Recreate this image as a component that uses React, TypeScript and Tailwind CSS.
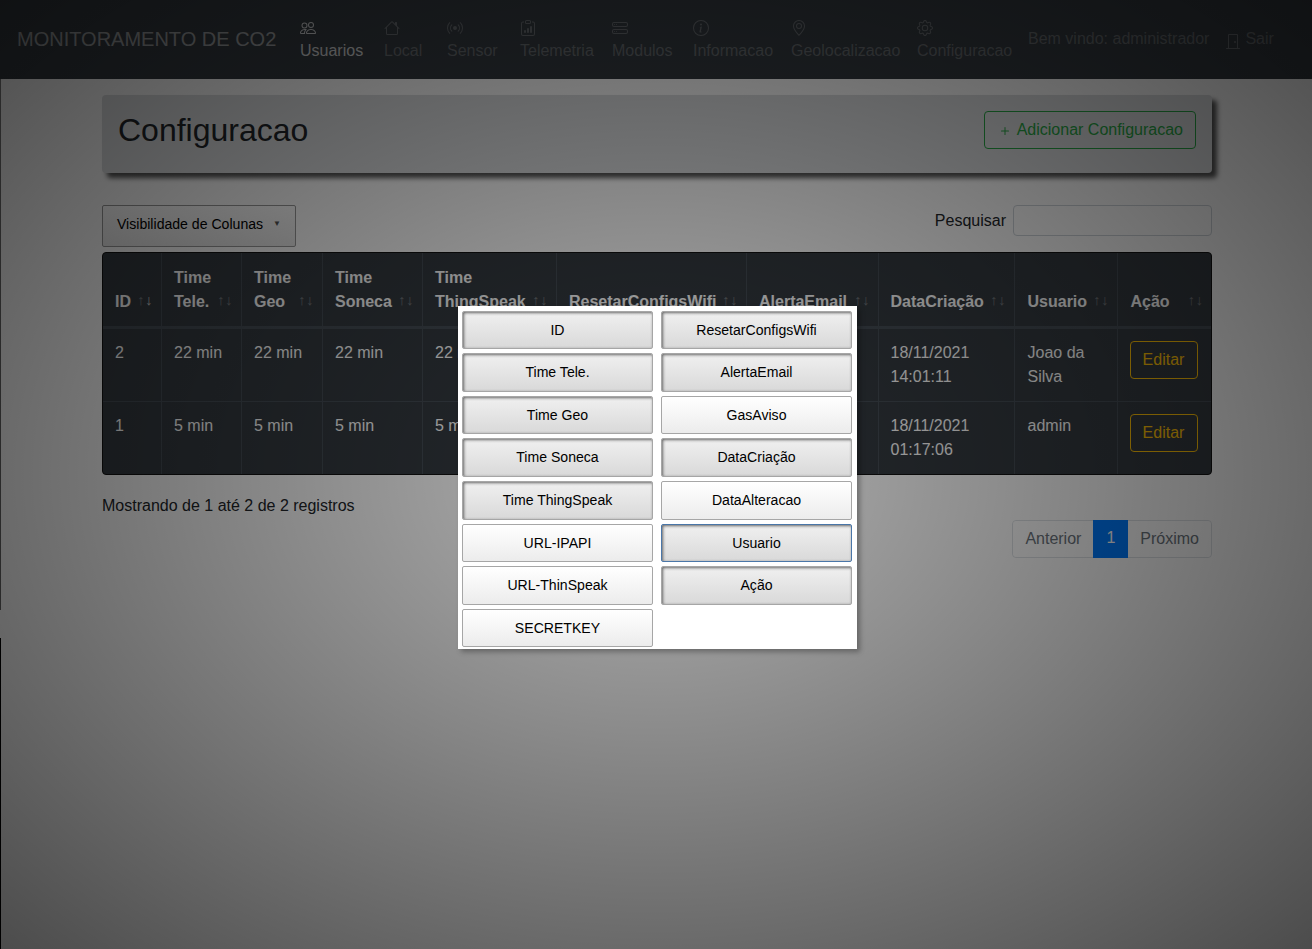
import { BsPeople, BsHouse, BsBroadcast, BsClipboardData, BsHddStack, BsInfoCircle, BsGeoAlt, BsGear, BsDoorClosed, BsPlus } from "react-icons/bs"

const navItems = [
  { label: "Usuarios", Icon: BsPeople, width: "w-[84px]", active: true },
  { label: "Local", Icon: BsHouse, width: "w-[63px]" },
  { label: "Sensor", Icon: BsBroadcast, width: "w-[73px]" },
  { label: "Telemetria", Icon: BsClipboardData, width: "w-[92px]" },
  { label: "Modulos", Icon: BsHddStack, width: "w-[81px]" },
  { label: "Informacao", Icon: BsInfoCircle, width: "w-[98px]" },
  { label: "Geolocalizacao", Icon: BsGeoAlt, width: "w-[126px]" },
  { label: "Configuracao", Icon: BsGear, width: "w-[111px]" },
]

const columns = [
  { lines: ["ID"], width: "w-[58px]", pad: "pl-3", active: true },
  { lines: ["Time", "Tele."], width: "w-[80px]", pad: "pl-[12.5px]" },
  { lines: ["Time", "Geo"], width: "w-[81px]", pad: "pl-[12.5px]" },
  { lines: ["Time", "Soneca"], width: "w-[100px]", pad: "pl-[12.5px]" },
  { lines: ["Time", "ThingSpeak"], width: "w-[134px]", pad: "pl-[12.5px]" },
  { lines: ["ResetarConfigsWifi"], width: "w-[190px]", pad: "pl-[12.5px]" },
  { lines: ["AlertaEmail"], width: "w-[132px]", pad: "pl-[12.5px]" },
  { lines: ["DataCriação"], width: "w-[136px]", pad: "pl-3" },
  { lines: ["Usuario"], width: "w-[103px]", pad: "pl-[13px]" },
  { lines: ["Ação"], width: "w-[94px]", pad: "pl-[13px]" },
]

const rows = [
  ["2", "22 min", "22 min", "22 min", "22 min", "", "", "18/11/2021 14:01:11", "Joao da Silva"],
  ["1", "5 min", "5 min", "5 min", "5 min", "", "", "18/11/2021 01:17:06", "admin"],
]

const leftButtons = [
  { label: "ID", on: true },
  { label: "Time Tele.", on: true },
  { label: "Time Geo", on: true },
  { label: "Time Soneca", on: true },
  { label: "Time ThingSpeak", on: true },
  { label: "URL-IPAPI" },
  { label: "URL-ThinSpeak" },
  { label: "SECRETKEY" },
]

const rightButtons = [
  { label: "ResetarConfigsWifi", on: true },
  { label: "AlertaEmail", on: true },
  { label: "GasAviso" },
  { label: "DataCriação", on: true },
  { label: "DataAlteracao" },
  { label: "Usuario", on: true, focus: true },
  { label: "Ação", on: true },
]

function ColumnButton({ label, on, focus }: { label: string; on?: boolean; focus?: boolean }) {
  return (
    <button
      className={
        "block w-full h-[38.6px] mb-[4px] border text-center text-[14.08px] leading-[22.5px] text-black rounded-[2px] " +
        (on
          ? "bg-gradient-to-b from-[#f0f0f0] to-[#d9d9d9] shadow-[inset_1px_1px_3px_#666] "
          : "bg-gradient-to-b from-white to-[#ececec] ") +
        (focus ? "border-[#4a76a8]" : "border-[#a6a6a6]")
      }
    >
      {label}
    </button>
  )
}

function App() {
  return (
    <div className="relative min-h-[949px] bg-white font-['Liberation_Sans',Arial,sans-serif] text-[16px] leading-6 text-[#212529]">
      {/* Navbar */}
      <div className="flex items-center h-[79px] bg-[#343a40] pl-[17px]">
        <div className="w-[283px] pb-[2px] text-[20px] text-white/50 whitespace-nowrap">MONITORAMENTO DE CO2</div>
        <div className="flex">
          {navItems.map(({ label, Icon, width, active }) => (
            <div key={label} className={width + " pt-[3px] whitespace-nowrap " + (active ? "text-white/75" : "text-white/25")}>
              <Icon className="w-4 h-4 mb-[3px]" />
              <div>{label}</div>
            </div>
          ))}
        </div>
        <div className="pb-[2px] text-white/25 whitespace-nowrap">Bem vindo: administrador</div>
        <div className="flex items-center ml-4 text-white/25">
          <BsDoorClosed className="w-4 h-4 mr-[4px] mt-[2px]" />
          <span className="pb-[2px]">Sair</span>
        </div>
      </div>

      {/* Page body */}
      <div className="w-[1110px] ml-[102px] pt-4">
        <div className="flex justify-between h-[78px] bg-[#dcdee0] rounded-[4px] shadow-[5px_5px_5px_#555] pl-4 pr-4 pt-4">
          <h1 className="text-[32px] leading-[38px] font-normal">Configuracao</h1>
          <button className="flex items-center h-[38px] pl-3 pr-3 border border-[#28a745] rounded-[4px] text-[#28a745]">
            <BsPlus className="w-4 h-4 mr-[4px] mt-[2px]" />
            Adicionar Configuracao
          </button>
        </div>

        <div className="flex justify-between mt-8">
          <button className="flex items-center justify-center w-[194px] h-[42px] pb-1 border border-[#999] rounded-[2px] bg-gradient-to-b from-white to-[#e9e9e9] text-[14.08px] text-black">
            Visibilidade de Colunas
            <span className="ml-[10px] text-[8px] text-[#555]">▼</span>
          </button>
          <div className="flex items-center h-[31px]">
            <span className="mr-[7px]">Pesquisar</span>
            <input className="w-[199px] h-[31px] bg-white border border-[#ced4da] rounded-[4px]" />
          </div>
        </div>

        {/* Table */}
        <div className="mt-[5px] rounded-[4px] overflow-hidden border border-[#111] bg-[#343a40]">
          <table className="table-fixed w-[1108px] border-collapse text-white">
            <thead>
              <tr className="border-b-[3px] border-[#454d55]">
                {columns.map((c) => (
                  <th key={c.lines.join()} className={c.width + " " + c.pad + " relative h-[74px] pr-3 pb-[12px] align-bottom text-left font-bold whitespace-nowrap border-l border-[#454d55] first:border-l-0"}>
                    {c.lines.map((line) => (
                      <div key={line}>{line}</div>
                    ))}
                    <span className="absolute right-4 bottom-[14px] text-[14.4px] opacity-30">↑</span>
                    <span className={"absolute right-2 bottom-[14px] text-[14.4px] " + (c.active ? "opacity-70" : "opacity-30")}>↓</span>
                  </th>
                ))}
              </tr>
            </thead>
            <tbody>
              {rows.map((row, r) => (
                <tr key={row[0]} className="border-b border-[#454d55] last:border-b-0">
                  {row.map((cell, i) => (
                    <td key={i} className={"pt-3 pr-3 align-top border-l border-[#454d55] first:border-l-0 " + (i === 0 || i === 7 ? "pl-3" : i === 8 ? "pl-[13px]" : "pl-[12.5px]") + (r === 0 ? " h-[74px]" : " h-[73px]")}>
                      {cell}
                    </td>
                  ))}
                  <td className="h-[73px] pl-3 pr-3 pt-3 align-top border-l border-[#454d55]">
                    <button className="w-[68px] h-[38px] border border-[#ffc107] rounded-[4px] text-[#ffc107]">Editar</button>
                  </td>
                </tr>
              ))}
            </tbody>
          </table>
        </div>

        <div className="mt-[19px]">Mostrando de 1 até 2 de 2 registros</div>

        <div className="flex justify-end mt-[2px]">
          <div className="flex h-[38px] border border-[#dee2e6] rounded-[4px]">
            <span className="px-3 pt-[6px] text-[#6c757d] bg-white rounded-l-[4px]">Anterior</span>
            <span className="px-[13px] pt-[6px] text-white bg-[#007bff] -my-px">1</span>
            <span className="px-3 pt-[6px] text-[#6c757d] bg-white rounded-r-[4px]">Próximo</span>
          </div>
        </div>
      </div>

      {/* Overlay behind the column picker */}
      <div className="absolute inset-0 bg-[radial-gradient(ellipse_farthest-corner_at_center,rgba(0,0,0,0.3)_0%,rgba(0,0,0,0.7)_100%)]" />

      {/* Hairlines on the left edge of the window */}
      <div className="absolute left-0 top-[79px] w-px h-[531px] bg-[#2a2a2a]" />
      <div className="absolute left-0 top-[638px] w-px h-[311px] bg-black" />

      {/* Column picker */}
      <div className="absolute left-[458px] top-[306px] w-[399px] h-[343px] bg-white shadow-[3px_3px_5px_rgba(0,0,0,0.3)] pl-1 pr-[5px] pt-[4.6px]">
        <div className="grid grid-cols-2 gap-x-2">
          <div>
            {leftButtons.map((b) => (
              <ColumnButton key={b.label} {...b} />
            ))}
          </div>
          <div>
            {rightButtons.map((b) => (
              <ColumnButton key={b.label} {...b} />
            ))}
          </div>
        </div>
      </div>
    </div>
  )
}

export default App
